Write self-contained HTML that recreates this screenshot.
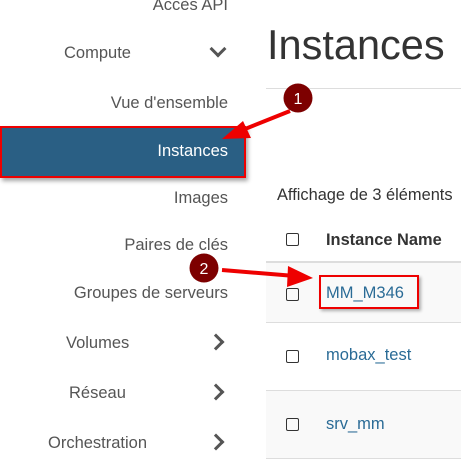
<!DOCTYPE html>
<html><head><meta charset="utf-8"><style>
body{margin:0;width:461px;height:461px;overflow:hidden;background:#fff;font-family:"Liberation Sans",sans-serif;position:relative}
.t{position:absolute;font-size:16.5px;color:#555;white-space:nowrap}
.r{right:233px}
.chev{position:absolute;left:212px;width:9px;height:9px;border-right:3px solid #555;border-bottom:3px solid #555}
.cb{position:absolute;left:286px;width:11px;height:11px;border:1.5px solid #333;border-radius:2px}
.row{position:absolute;left:266px;width:195px;border-top:1px solid #ddd}
</style></head><body>
<div class="t r" style="top:-4px">Accès API</div>
<div class="t" style="left:64px;top:44px">Compute</div>
<div class="chev" style="top:43px;transform:rotate(45deg)"></div>
<div class="t r" style="top:94px">Vue d'ensemble</div>
<div style="position:absolute;left:0;top:126px;width:242px;height:48px;background:#2a5f84;border:2px solid #e00;box-shadow:2px 3px 4px rgba(0,0,0,.35)"></div>
<div class="t r" style="top:142px;color:#fff">Instances</div>
<div class="t r" style="top:189px">Images</div>
<div class="t r" style="top:236px">Paires de clés</div>
<div class="t r" style="top:284px">Groupes de serveurs</div>
<div class="t" style="left:66px;top:334px">Volumes</div>
<div class="chev" style="top:336px;left:210px;transform:rotate(-45deg)"></div>
<div class="t" style="left:69px;top:384px">Réseau</div>
<div class="chev" style="top:386px;left:210px;transform:rotate(-45deg)"></div>
<div class="t" style="left:48px;top:434px">Orchestration</div>
<div class="chev" style="top:436px;left:210px;transform:rotate(-45deg)"></div>

<div style="position:absolute;left:267px;top:21px;font-size:41.5px;color:#333">Instances</div>
<div style="position:absolute;left:266px;top:88px;width:195px;border-top:1px solid #ddd"></div>
<div style="position:absolute;left:277px;top:186px;font-size:16.4px;color:#333;white-space:nowrap">Affichage de 3 éléments</div>
<div class="cb" style="top:233px"></div>
<div style="position:absolute;left:326px;top:231px;font-size:16.4px;font-weight:bold;color:#333;white-space:nowrap">Instance Name</div>
<div class="row" style="top:261px;height:60px;background:#f9f9f9;border-top:2px solid #ddd"></div>
<div class="row" style="top:322px;height:68px"></div>
<div class="row" style="top:390px;height:68px;background:#f9f9f9"></div>
<div class="row" style="top:458px;height:3px"></div>
<div class="cb" style="top:288px"></div>
<div class="cb" style="top:350px"></div>
<div class="cb" style="top:418px"></div>
<div style="position:absolute;left:319px;top:275px;width:96px;height:30px;border:2px solid #e00;box-shadow:2px 2px 3px rgba(0,0,0,.3)"></div>
<div style="position:absolute;left:326px;top:284px;font-size:16.5px;color:#2a6b96">MM_M346</div>
<div style="position:absolute;left:326px;top:346px;font-size:16.5px;color:#2a6b96">mobax_test</div>
<div style="position:absolute;left:326px;top:415px;font-size:16.5px;color:#2a6b96">srv_mm</div>

<svg width="461" height="461" style="position:absolute;left:0;top:0">
<line x1="290" y1="111" x2="240" y2="131" stroke="#e00" stroke-width="4"/>
<polygon points="222,139 243,121 251,138" fill="#e00"/>
<line x1="222" y1="270" x2="295" y2="276" stroke="#e00" stroke-width="4"/>
<polygon points="313,278 288,266 287,287" fill="#e00"/>
<circle cx="298" cy="98" r="14.5" fill="#7d0000"/>
<circle cx="204" cy="268" r="14.5" fill="#7d0000"/>
<text x="298" y="104" fill="#fff" font-size="16" text-anchor="middle" font-family="Liberation Sans">1</text>
<text x="204" y="274" fill="#fff" font-size="16" text-anchor="middle" font-family="Liberation Sans">2</text>
</svg>
</body></html>
